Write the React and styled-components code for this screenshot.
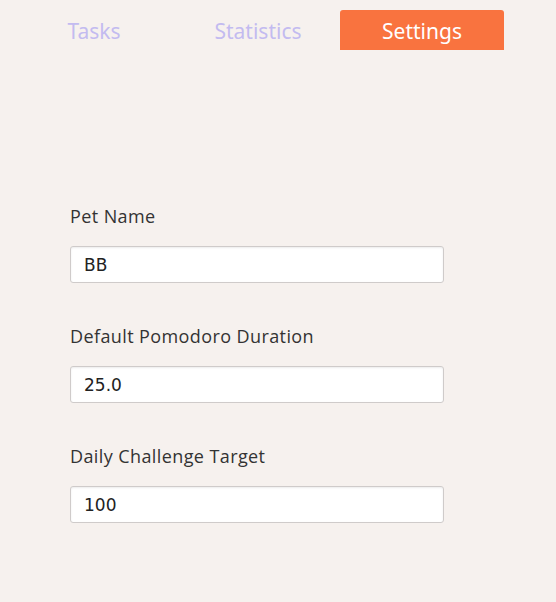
import React, { useState } from 'react';
import styled, { createGlobalStyle } from 'styled-components';

const GlobalStyle = createGlobalStyle`
  html, body {
    margin: 0;
    padding: 0;
    background-color: #f6f1ee;
  }
  body {
    font-family: "Open Sans", "Liberation Sans", sans-serif;
  }
`;

const tabs = ['Tasks', 'Statistics', 'Settings'];

const fields = [
  { label: 'Pet Name', value: 'BB' },
  { label: 'Default Pomodoro Duration', value: '25.0' },
  { label: 'Daily Challenge Target', value: '100' },
];

export default function App() {
  const [active, setActive] = useState('Settings');
  const [values, setValues] = useState(fields.map((f) => f.value));

  function handleChange(index, value) {
    const next = [...values];
    next[index] = value;
    setValues(next);
  }

  return (
    <Page>
      <GlobalStyle />
      <TabBar>
        {tabs.map((tab) => (
          <Tab key={tab} $active={active === tab} onClick={() => setActive(tab)}>
            {tab}
          </Tab>
        ))}
      </TabBar>
      <Form>
        {fields.map((field, index) => (
          <Field key={field.label}>
            <Label>{field.label}</Label>
            <Input
              value={values[index]}
              onChange={(e) => handleChange(index, e.target.value)}
            />
          </Field>
        ))}
      </Form>
    </Page>
  );
}

const Page = styled.div`
  min-height: 100vh;
  background-color: #f6f1ee;
`;

const TabBar = styled.div`
  display: flex;
  padding: 10px 0 0 12px;
`;

const Tab = styled.button`
  width: 164px;
  height: 40px;
  border: none;
  border-radius: 3px 3px 0 0;
  background-color: ${(p) => (p.$active ? '#f9733f' : 'transparent')};
  color: ${(p) => (p.$active ? '#ffffff' : '#c3bbf0')};
  font-family: "Noto Sans", "Open Sans", sans-serif;
  font-size: 21px;
  padding: 2px 0 0;
  cursor: pointer;
`;

const Form = styled.div`
  display: flex;
  flex-direction: column;
  gap: 41px;
  padding: 154px 0 0 70px;
`;

const Field = styled.div`
  display: flex;
  flex-direction: column;
  gap: 18px;
`;

const Label = styled.label`
  font-family: "Open Sans", sans-serif;
  font-size: 18px;
  letter-spacing: 0.4px;
  line-height: 24px;
  color: #333333;
`;

const Input = styled.input`
  box-sizing: border-box;
  width: 374px;
  height: 37px;
  padding: 0 13px;
  border: 1px solid #cfcbca;
  border-radius: 3px;
  background-color: #ffffff;
  box-shadow: inset 0 1px 2px rgba(0, 0, 0, 0.08);
  font-family: "DejaVu Sans", Verdana, sans-serif;
  font-size: 17px;
  color: #222222;
  outline: none;
`;
